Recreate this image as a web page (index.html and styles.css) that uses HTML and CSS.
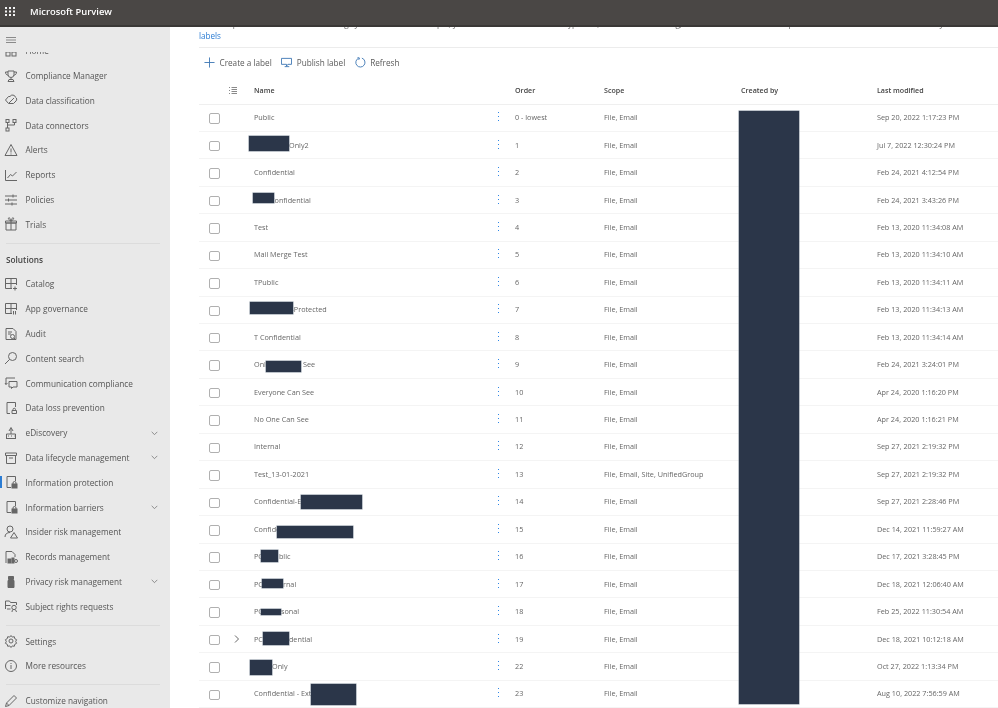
FILE: index.html
```html
<!DOCTYPE html>
<html lang="en">
<head>
<meta charset="utf-8">
<title>Microsoft Purview</title>
<link rel="stylesheet" href="styles.css">
</head>
<body>
<div class="app">
  <header class="topbar">
    <svg class="waffle" viewBox="0 0 10 9" aria-hidden="true"><g fill="#f4f4f4"><rect x="0" y="0" width="2" height="2"/><rect x="4" y="0" width="2" height="2"/><rect x="8" y="0" width="2" height="2"/><rect x="0" y="3.5" width="2" height="2"/><rect x="4" y="3.5" width="2" height="2"/><rect x="8" y="3.5" width="2" height="2"/><rect x="0" y="7" width="2" height="2"/><rect x="4" y="7" width="2" height="2"/><rect x="8" y="7" width="2" height="2"/></g></svg>
    <span class="brand">Microsoft Purview</span>
  </header>
  <div class="body">
    <aside class="sidebar">
      <div class="burger"><svg viewBox="0 0 10 6" class="burger-icon" aria-hidden="true"><path d="M0 .5h10M0 3h10M0 5.500h10" stroke="#8a8a8a" fill="none"/></svg></div>
      <nav class="nav">
        <div class="nav-scroll">
          <a class="item"><svg class="ico" viewBox="0 0 16 16"><rect x="3" y="3" width="4" height="4"/><rect x="9" y="3" width="4" height="4"/><rect x="3" y="9" width="4" height="4"/><rect x="9" y="9" width="4" height="4"/></svg><span>Home</span></a>
          <a class="item"><svg class="ico" viewBox="0 0 16 16"><path d="M5 3h6v3.500a3 3 0 0 1-6 0zM5 4H2.500c0 2 1 3 2.700 3.300M11 4h2.500c0 2-1 3-2.700 3.300M8 9.500v2M5 13.500l1-2h4l1 2z"/></svg><span>Compliance Manager</span></a>
          <a class="item"><svg class="ico" viewBox="0 0 16 16"><path d="M2.500 8l3-3.500h1.500a3 3 0 0 1 5.500.8 2.300 2.300 0 0 1 .5 3.700l-2.500 2.500H5.500zM6 11l5-5"/></svg><span>Data classification</span></a>
          <a class="item"><svg class="ico" viewBox="0 0 16 16"><rect x="3" y="2.500" width="3" height="3"/><rect x="10" y="2.500" width="3" height="3"/><rect x="3" y="11" width="3" height="3"/><path d="M4.500 5.500V11M11.500 5.500v2.500h-7"/></svg><span>Data connectors</span></a>
          <a class="item"><svg class="ico" viewBox="0 0 16 16"><path d="M8 2.500l6 11H2zM8 6.500v4M8 11.500v1"/></svg><span>Alerts</span></a>
          <a class="item"><svg class="ico" viewBox="0 0 16 16"><path d="M2.500 3v10.500H14M4.500 11l3-3.500 2 1.500 4-4"/></svg><span>Reports</span></a>
          <a class="item"><svg class="ico" viewBox="0 0 16 16"><path d="M2 4h12M2 8h12M2 12h12M10 2.500v3M5.500 6.500v3M9 10.500v3"/></svg><span>Policies</span></a>
          <a class="item"><svg class="ico" viewBox="0 0 16 16"><path d="M3 7h10v7H3zM2.500 5h11v2h-11zM8 5v9M8 5C6 4 5 3 5.500 2S8 3 8 5c0-2 2-4 2.500-3S10 4 8 5"/></svg><span>Trials</span></a>
          <div class="rule"></div>
          <div class="section">Solutions</div>
          <a class="item"><svg class="ico" viewBox="0 0 16 16"><path d="M2.500 2.500h11V9M2.500 2.500v10H9M8 2.500v10M2.500 7.500h11M12 10.500v4M10 12.500h4"/></svg><span>Catalog</span></a>
          <a class="item"><svg class="ico" viewBox="0 0 16 16"><path d="M2.500 2.500h11V9M2.500 2.500v10H9M8 2.500v10M2.500 7.500h11M10.500 10v3.500M12.500 10v3.500"/></svg><span>App governance</span></a>
          <a class="item"><svg class="ico" viewBox="0 0 16 16"><path d="M3 2.500h7l3 3v8H3zM5 6h4M5 8h3"/><circle cx="9.500" cy="10.500" r="2"/><path d="M11 12l2 2"/></svg><span>Audit</span></a>
          <a class="item"><svg class="ico" viewBox="0 0 16 16"><circle cx="9.500" cy="6.500" r="4"/><path d="M6.500 9.500L2 14"/></svg><span>Content search</span></a>
          <a class="item"><svg class="ico" viewBox="0 0 16 16"><path d="M12 3H3v6.500M2 8l1 1.500L4.500 8M6 6.500h8V12h-4l-1.500 1.500V12H6z"/></svg><span>Communication compliance</span></a>
          <a class="item"><svg class="ico" viewBox="0 0 16 16"><path d="M12.500 7V2.500H4v11h3M9 10.500h4.500v3H9zM10 10.500V9.500a1.200 1.200 0 0 1 2.500 0v1"/></svg><span>Data loss prevention</span></a>
          <a class="item has-sub"><svg class="ico" viewBox="0 0 16 16"><path d="M3 13.500h10M3.500 13.500V9h9v4.500M5 11h1M8 11h1M11 11h.5M8 9V4M6 6l2-3.500L10 6"/></svg><span>eDiscovery</span><svg class="chev" viewBox="0 0 10 6"><path d="M1 1l4 4 4-4"/></svg></a>
          <a class="item has-sub"><svg class="ico" viewBox="0 0 16 16"><path d="M2.500 3h11v2.500h-11zM3.500 5.500v8h9v-8M6 8h4"/></svg><span>Data lifecycle management</span><svg class="chev" viewBox="0 0 10 6"><path d="M1 1l4 4 4-4"/></svg></a>
          <a class="item current"><svg class="ico" viewBox="0 0 16 16"><path d="M12.500 7V2.500H4v11h4"/><rect class="solid" x="9" y="10" width="5" height="4"/><path d="M10 10V9a1.500 1.500 0 0 1 3 0v1"/></svg><span>Information protection</span></a>
          <a class="item has-sub"><svg class="ico" viewBox="0 0 16 16"><path d="M12.500 7V2.500H4v11h4"/><rect class="solid" x="9" y="10" width="5" height="4"/><path d="M10 10V9a1.500 1.500 0 0 1 3 0v1"/></svg><span>Information barriers</span><svg class="chev" viewBox="0 0 10 6"><path d="M1 1l4 4 4-4"/></svg></a>
          <a class="item"><svg class="ico" viewBox="0 0 16 16"><circle cx="7" cy="5" r="3"/><path d="M2 13c0-3 2-4.500 5-4.500M11 8.500l3.500 5.500h-7z"/></svg><span>Insider risk management</span></a>
          <a class="item"><svg class="ico" viewBox="0 0 16 16"><path d="M3 14V2.500h6l3 3V8"/><rect class="solid" x="5" y="10" width="3" height="4"/><rect class="solid" x="9" y="9" width="2" height="5"/><circle cx="13" cy="12" r="1.500"/></svg><span>Records management</span></a>
          <a class="item has-sub"><svg class="ico" viewBox="0 0 16 16"><path class="solid" d="M5.500 2.500h5v3h-5zM5 6.500h6v7H5z"/></svg><span>Privacy risk management</span><svg class="chev" viewBox="0 0 10 6"><path d="M1 1l4 4 4-4"/></svg></a>
          <a class="item"><svg class="ico" viewBox="0 0 16 16"><path d="M2.500 11V3h4l1 1.500h6V7M2.500 7.500h5M7.500 11H4"/><circle cx="11" cy="9.500" r="2.200"/><path d="M9 14c0-2 1-2.500 2-2.500s2 .5 2.500 2.500"/></svg><span>Subject rights requests</span></a>
          <div class="rule"></div>
          <a class="item"><svg class="ico" viewBox="0 0 16 16"><circle cx="8" cy="8" r="2"/><path d="M8 2.500l1.300 1.600 2-.4.5 2 1.800 1-.9 1.800.9 1.800-1.800 1-.5 2-2-.4L8 14.500l-1.300-1.600-2 .4-.5-2-1.800-1 .9-1.800-.9-1.800 1.800-1 .5-2 2 .4z"/></svg><span>Settings</span></a>
          <a class="item"><svg class="ico" viewBox="0 0 16 16"><circle cx="8" cy="8" r="5.500"/><path d="M8 7v4M8 5v1"/></svg><span>More resources</span></a>
          <div class="rule"></div>
          <a class="item"><svg class="ico" viewBox="0 0 16 16"><path d="M2.500 13.500l1-3.500 7.500-7.500 2.500 2.500L6 12.500zM3.500 10L6 12.500"/></svg><span>Customize navigation</span></a>
        </div>
      </nav>
    </aside>
    <main class="main">
      <div class="intro">
        <p class="intro-text">or site is protected based on the settings you choose. For example, you can create labels that encrypt files, add content marking, and control user access to specific sites. Learn more about sensitivity<br><a class="link">labels</a></p>
      </div>
      <div class="toolbar">
        <button class="tool"><svg class="tool-ico" viewBox="0 0 12 12"><path d="M6 .5v11M.5 6h11"/></svg>Create a label</button>
        <button class="tool"><svg class="tool-ico" viewBox="0 0 12 12"><path d="M.5 1.500h11v6.500H7.500L6 10 6 8H.500zM4 10.500h5"/></svg>Publish label</button>
        <button class="tool"><svg class="tool-ico" viewBox="0 0 12 12"><path d="M7.500 1.200a5 5 0 1 1-3.500.1M2.800 .5L5 1.200 4 3.200"/></svg>Refresh</button>
      </div>
      <div class="table">
        <div class="row head">
          <div class="c-check"></div>
          <div class="c-exp"><svg class="list-ico" viewBox="0 0 8 7"><path d="M0 .5h1M0 3.500h1M0 6.500h1M2.500 .5H8M2.500 2.500H8M2.500 4.500H8M2.500 6.500H8"/></svg></div>
          <div>Name</div><div></div><div>Order</div><div>Scope</div><div>Created by</div><div>Last modified</div>
        </div>
        <div class="row"><div class="c-check"><span class="box"></span></div><div class="c-exp"></div><div>Public</div><div class="c-more"></div><div>0 - lowest</div><div>File, Email</div><div></div><div>Sep 20, 2022 1:17:23 PM</div></div>
        <div class="row"><div class="c-check"><span class="box"></span></div><div class="c-exp"></div><div class="p-only2">Only2</div><div class="c-more"></div><div>1</div><div>File, Email</div><div></div><div>Jul 7, 2022 12:30:24 PM</div></div>
        <div class="row"><div class="c-check"><span class="box"></span></div><div class="c-exp"></div><div>Confidential</div><div class="c-more"></div><div>2</div><div>File, Email</div><div></div><div>Feb 24, 2021 4:12:54 PM</div></div>
        <div class="row"><div class="c-check"><span class="box"></span></div><div class="c-exp"></div><div class="p-conf">Confidential</div><div class="c-more"></div><div>3</div><div>File, Email</div><div></div><div>Feb 24, 2021 3:43:26 PM</div></div>
        <div class="row"><div class="c-check"><span class="box"></span></div><div class="c-exp"></div><div>Test</div><div class="c-more"></div><div>4</div><div>File, Email</div><div></div><div>Feb 13, 2020 11:34:08 AM</div></div>
        <div class="row"><div class="c-check"><span class="box"></span></div><div class="c-exp"></div><div>Mail Merge Test</div><div class="c-more"></div><div>5</div><div>File, Email</div><div></div><div>Feb 13, 2020 11:34:10 AM</div></div>
        <div class="row"><div class="c-check"><span class="box"></span></div><div class="c-exp"></div><div>TPublic</div><div class="c-more"></div><div>6</div><div>File, Email</div><div></div><div>Feb 13, 2020 11:34:11 AM</div></div>
        <div class="row"><div class="c-check"><span class="box"></span></div><div class="c-exp"></div><div class="p-prot">-Protected</div><div class="c-more"></div><div>7</div><div>File, Email</div><div></div><div>Feb 13, 2020 11:34:13 AM</div></div>
        <div class="row"><div class="c-check"><span class="box"></span></div><div class="c-exp"></div><div>T Confidential</div><div class="c-more"></div><div>8</div><div>File, Email</div><div></div><div>Feb 13, 2020 11:34:14 AM</div></div>
        <div class="row"><div class="c-check"><span class="box"></span></div><div class="c-exp"></div><div>Onl<span class="g-see">See</span></div><div class="c-more"></div><div>9</div><div>File, Email</div><div></div><div>Feb 24, 2021 3:24:01 PM</div></div>
        <div class="row"><div class="c-check"><span class="box"></span></div><div class="c-exp"></div><div>Everyone Can See</div><div class="c-more"></div><div>10</div><div>File, Email</div><div></div><div>Apr 24, 2020 1:16:20 PM</div></div>
        <div class="row"><div class="c-check"><span class="box"></span></div><div class="c-exp"></div><div>No One Can See</div><div class="c-more"></div><div>11</div><div>File, Email</div><div></div><div>Apr 24, 2020 1:16:21 PM</div></div>
        <div class="row"><div class="c-check"><span class="box"></span></div><div class="c-exp"></div><div>Internal</div><div class="c-more"></div><div>12</div><div>File, Email</div><div></div><div>Sep 27, 2021 2:19:32 PM</div></div>
        <div class="row"><div class="c-check"><span class="box"></span></div><div class="c-exp"></div><div>Test_13-01-2021</div><div class="c-more"></div><div>13</div><div>File, Email, Site, UnifiedGroup</div><div></div><div>Sep 27, 2021 2:19:32 PM</div></div>
        <div class="row"><div class="c-check"><span class="box"></span></div><div class="c-exp"></div><div>Confidential-E</div><div class="c-more"></div><div>14</div><div>File, Email</div><div></div><div>Sep 27, 2021 2:28:46 PM</div></div>
        <div class="row"><div class="c-check"><span class="box"></span></div><div class="c-exp"></div><div>Confidential</div><div class="c-more"></div><div>15</div><div>File, Email</div><div></div><div>Dec 14, 2021 11:59:27 AM</div></div>
        <div class="row"><div class="c-check"><span class="box"></span></div><div class="c-exp"></div><div>PC<span class="g-16">blic</span></div><div class="c-more"></div><div>16</div><div>File, Email</div><div></div><div>Dec 17, 2021 3:28:45 PM</div></div>
        <div class="row"><div class="c-check"><span class="box"></span></div><div class="c-exp"></div><div>PC<span class="g-17">rnal</span></div><div class="c-more"></div><div>17</div><div>File, Email</div><div></div><div>Dec 18, 2021 12:06:40 AM</div></div>
        <div class="row"><div class="c-check"><span class="box"></span></div><div class="c-exp"></div><div>PC<span class="g-18">sonal</span></div><div class="c-more"></div><div>18</div><div>File, Email</div><div></div><div>Feb 25, 2022 11:30:54 AM</div></div>
        <div class="row"><div class="c-check"><span class="box"></span></div><div class="c-exp"><svg class="expander" viewBox="0 0 5 8"><path d="M1 .5L4.500 4 1 7.500"/></svg></div><div>PC<span class="g-19">dential</span></div><div class="c-more"></div><div>19</div><div>File, Email</div><div></div><div>Dec 18, 2021 10:12:18 AM</div></div>
        <div class="row"><div class="c-check"><span class="box"></span></div><div class="c-exp"></div><div class="p-only">Only</div><div class="c-more"></div><div>22</div><div>File, Email</div><div></div><div>Oct 27, 2022 1:13:34 PM</div></div>
        <div class="row"><div class="c-check"><span class="box"></span></div><div class="c-exp"></div><div>Confidential - Ext</div><div class="c-more"></div><div>23</div><div>File, Email</div><div></div><div>Aug 10, 2022 7:56:59 AM</div></div>

        <span class="redact r-author"></span>
        <span class="redact r1"></span>
        <span class="redact r3"></span>
        <span class="redact r7"></span>
        <span class="redact r9"></span>
        <span class="redact r14"></span>
        <span class="redact r15"></span>
        <span class="redact r16"></span>
        <span class="redact r17"></span>
        <span class="redact r18"></span>
        <span class="redact r19"></span>
        <span class="redact r22"></span>
        <span class="redact r23"></span>
      </div>
    </main>
  </div>
</div>
</body>
</html>
```

FILE: styles.css
```css
* { box-sizing: border-box; }
html, body { margin: 0; height: 100%; overflow: hidden; background: #fff; }
body { font-family: "Open Sans", "Noto Sans", sans-serif; color: #5a5a5a; }
.app { height: 708px; display: flex; flex-direction: column; overflow: hidden; filter: blur(0.3px); }

.topbar { height: 27px; flex: none; display: flex; align-items: center; gap: 15px; padding: 0 0 2px 5px; background: #4a4745; border-bottom: 2px solid #3a3836; }
.waffle { width: 10px; height: 9px; display: block; }
.brand { color: #fff; font-size: 9.4px; font-weight: 600; }

.body { flex: 1; display: flex; min-height: 0; }
.sidebar { width: 170px; flex: none; background: #e9e9e9; display: flex; flex-direction: column; }
.burger { height: 24.500px; flex: none; padding: 10px 0 0 6px; }
.burger-icon { display: block; width: 10px; height: 6px; }
.nav { flex: 1; overflow: hidden; min-height: 0; }
.nav-scroll { margin-top: -13.100px; }
.item { height: 24.8px; display: flex; align-items: center; padding-left: 2.5px; font-size: 8.25px; color: #555; position: relative; }
.item > span { margin-left: 7px; flex: 1; }
.ico { width: 16px; height: 16px; flex: none; fill: none; stroke: #666; stroke-width: 1; }
.ico .solid { fill: #666; }
.chev { width: 7px; height: 4.500px; flex: none; margin-right: 12px; fill: none; stroke: #666; stroke-width: 1; }
.current::before { content: ""; position: absolute; left: 0; top: 6px; width: 1.500px; height: 12px; background: #2b7cd3; }
.rule { height: 1px; margin: 6px 10px 3px 6px; background: #dcdcdc; }
.section { height: 24.8px; display: flex; align-items: center; padding-left: 6px; font-size: 8.25px; font-weight: 600; color: #444; }

.main { flex: 1; min-width: 0; overflow: hidden; padding-left: 29px; }
.intro { height: 21px; border-bottom: 1px solid #ececec; }
.intro-text { margin: 0; font-size: 8.1px; line-height: 12px; white-space: nowrap; position: relative; top: -9px; color: #666; }
.link { color: #2b7cd3; }

.toolbar { height: 29px; display: flex; align-items: center; gap: 9.500px; padding-left: 5px; }
.tool { display: flex; align-items: center; gap: 4.500px; border: 0; padding: 0; background: none; font: inherit; font-size: 8.2px; color: #5a5a5a; }
.tool-ico { width: 11px; height: 11px; fill: none; stroke: #3f78b5; stroke-width: 1; }

.table { position: relative; }
.row { height: 27.450px; padding-bottom: 1px; display: grid; grid-template-columns: 27px 28px 236px 25px 89px 137px 136px 1fr; align-items: center; font-size: 7.25px; color: #666; border-bottom: 1px solid #f4f4f4; }
.head { height: 27.500px; padding-bottom: 0; font-size: 7.1px; font-weight: 600; color: #444; border-bottom-color: #efefef; }
.c-check { padding: 3px 0 0 10px; display: flex; }
.box { width: 10.500px; height: 10.500px; border: 1px solid #b0b0b0; border-radius: 2px; display: block; }
.c-exp { display: flex; }
.list-ico { width: 8px; height: 7px; margin-left: 3px; fill: none; stroke: #8a8a8a; stroke-width: 1; }
.expander { width: 5px; height: 8px; margin-left: 8px; fill: none; stroke: #666; stroke-width: 1; }
.c-more { width: 1.500px; height: 10px; margin-left: 7.500px; background: repeating-linear-gradient(to bottom, #2f86e6 0, #2f86e6 1.500px, transparent 1.500px, transparent 4px); }
.p-only2 { padding-left: 35px; }
.p-conf { padding-left: 16px; }
.p-prot { padding-left: 37.500px; }
.p-only { padding-left: 18px; }
.g-see { margin-left: 37px; }
.g-16 { margin-left: 16px; }
.g-17 { margin-left: 20px; }
.g-18 { margin-left: 18px; }
.g-19 { margin-left: 26px; }

.redact { position: absolute; background: #2b3649; box-shadow: 0 0 0 .5px #7d8795; }
.r-author { left: 540px; top: 34px; width: 60px; height: 593px; }
.r1 { left: 50px; top: 59px; width: 40px; height: 15px; }
.r3 { left: 54px; top: 116px; width: 21px; height: 10px; }
.r7 { left: 51px; top: 225px; width: 43px; height: 12px; }
.r9 { left: 67px; top: 284px; width: 35px; height: 11px; }
.r14 { left: 102px; top: 418px; width: 61px; height: 14px; }
.r15 { left: 78px; top: 449px; width: 76px; height: 12px; }
.r16 { left: 62px; top: 473px; width: 17px; height: 12px; }
.r17 { left: 63px; top: 502px; width: 21px; height: 9px; }
.r18 { left: 62px; top: 532px; width: 20px; height: 6px; }
.r19 { left: 64px; top: 555px; width: 26px; height: 13px; }
.r22 { left: 51px; top: 583px; width: 22px; height: 15px; }
.r23 { left: 112px; top: 607px; width: 45px; height: 21px; }
```
